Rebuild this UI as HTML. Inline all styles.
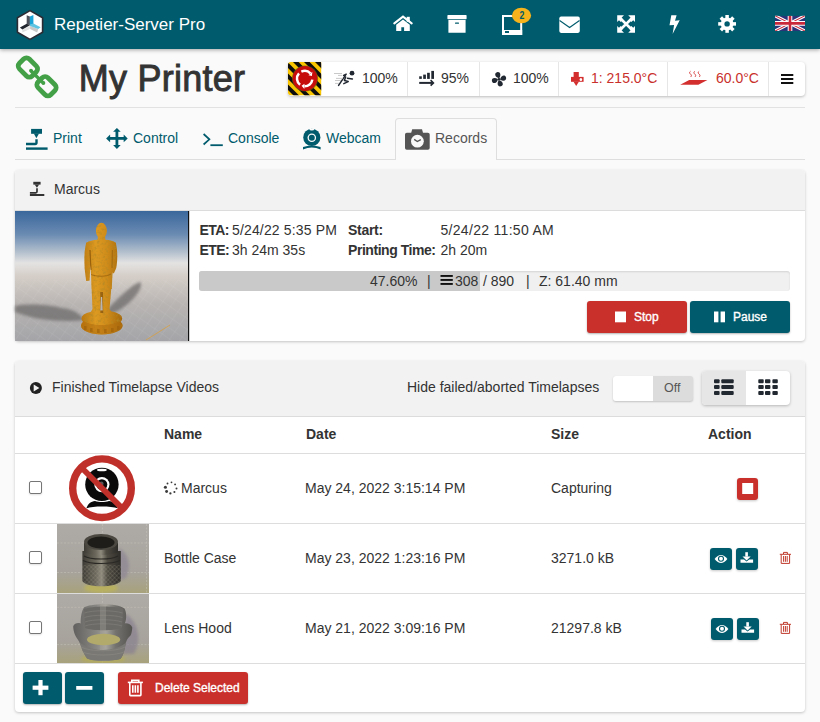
<!DOCTYPE html>
<html><head><meta charset="utf-8">
<style>
*{box-sizing:border-box}
html,body{margin:0;padding:0}
body{width:820px;height:722px;overflow:hidden;position:relative;background:#fafafa;font-family:"Liberation Sans",sans-serif;font-size:14px;color:#333}
.a{position:absolute}
.t{position:absolute;white-space:nowrap;line-height:16px;height:16px}
svg{position:absolute;overflow:visible}
#hdr{left:0;top:0;width:820px;height:49px;background:#005b6c;box-shadow:0 1px 4px rgba(0,0,0,.35)}
.bar{left:288px;top:62px;width:517px;height:34px;background:#fff;border-radius:4px;box-shadow:0 1px 3px rgba(0,0,0,.25)}
.div{position:absolute;top:0;width:1px;height:34px;background:#e6e6e6}
.panel{left:15px;width:790px;background:#fff;border-radius:4px;box-shadow:0 1px 3px rgba(0,0,0,.22)}
.ph{position:absolute;left:0;top:0;width:790px;background:#f2f2f2;border-bottom:1px solid #dcdcdc;border-radius:4px 4px 0 0}
.btn{position:absolute;border-radius:3px;box-shadow:0 1px 2px rgba(0,0,0,.3)}
.teal{background:#005b6c}
.red{background:#c9302c}
.hl{position:absolute;height:1px;background:#ddd}
.cb{position:absolute;width:13px;height:13px;border:1px solid #767676;border-radius:2px;background:#fff;box-shadow:0 1px 2px rgba(0,0,0,.12)}
.tc{color:#005b6c}
</style></head><body>

<!-- header -->
<div id="hdr" class="a"></div>
<div class="t" style="left:54px;top:15px;font-size:17px;line-height:20px;height:20px;color:#fff">Repetier-Server Pro</div>

<!-- title -->
<div class="t" style="left:78.8px;top:59px;font-size:36px;line-height:40px;height:40px;color:#333;-webkit-text-stroke:0.9px #333;letter-spacing:0.25px">My Printer</div>
<div class="hl" style="left:15px;top:107px;width:790px;background:#e2e2e2"></div>

<!-- status bar -->
<div class="a bar">
  <div class="div" style="left:119px"></div>
  <div class="div" style="left:191px"></div>
  <div class="div" style="left:270px"></div>
  <div class="div" style="left:379px"></div>
  <div class="div" style="left:480px"></div>
</div>
<div class="t" style="left:362px;top:70px">100%</div>
<div class="t" style="left:441px;top:70px">95%</div>
<div class="t" style="left:513px;top:70px">100%</div>
<div class="t" style="left:591px;top:70px;color:#c9302c">1: 215.0°C</div>
<div class="t" style="left:716px;top:70px;color:#c9302c">60.0°C</div>

<!-- tabs -->
<div class="hl" style="left:15px;top:159px;width:790px;background:#dedede"></div>
<div class="a" style="left:395px;top:118px;width:102px;height:42px;border:1px solid #dedede;border-bottom:none;border-radius:4px 4px 0 0;background:#fafafa"></div>
<div class="t tc" style="left:53px;top:130px">Print</div>
<div class="t tc" style="left:133px;top:130px">Control</div>
<div class="t tc" style="left:228px;top:130px">Console</div>
<div class="t tc" style="left:326px;top:130px">Webcam</div>
<div class="t" style="left:435px;top:130px;color:#555">Records</div>

<!-- panel 1 -->
<div class="a panel" style="top:170px;height:171px">
  <div class="ph" style="height:41px"></div>
</div>
<div class="t" style="left:54px;top:181px">Marcus</div>
<div class="t" style="left:199.5px;top:222px;font-weight:bold;letter-spacing:-0.6px">ETA:</div>
<div class="t" style="left:232px;top:222px;letter-spacing:0.15px">5/24/22 5:35 PM</div>
<div class="t" style="left:199.5px;top:242px;font-weight:bold;letter-spacing:-0.6px">ETE:</div>
<div class="t" style="left:232px;top:242px">3h 24m 35s</div>
<div class="t" style="left:348px;top:222px;font-weight:bold;letter-spacing:-0.3px">Start:</div>
<div class="t" style="left:440.5px;top:222px;letter-spacing:0.3px">5/24/22 11:50 AM</div>
<div class="t" style="left:348px;top:242px;font-weight:bold;letter-spacing:-0.45px">Printing Time:</div>
<div class="t" style="left:440.5px;top:242px">2h 20m</div>

<!-- progress -->
<div class="a" style="left:199px;top:271px;width:591px;height:20px;background:#f0f0f0;border-radius:3px;box-shadow:inset 0 1px 2px rgba(0,0,0,.12);overflow:hidden">
  <div class="a" style="left:0;top:0;width:281px;height:20px;background:#c9c9c9"></div>
</div>
<div class="t" style="left:370px;top:273px">47.60%</div>
<div class="t" style="left:427px;top:273px">|</div>
<div class="t" style="left:455px;top:273px">308</div>
<div class="t" style="left:483px;top:273px">/ 890</div>
<div class="t" style="left:526px;top:273px">|</div>
<div class="t" style="left:539px;top:273px">Z: 61.40 mm</div>

<!-- stop / pause -->
<div class="btn red" style="left:587px;top:301px;width:100px;height:32px"></div>
<div class="btn teal" style="left:690px;top:301px;width:100px;height:32px"></div>
<div class="t" style="left:634px;top:309px;color:#fff;font-size:12px;-webkit-text-stroke:0.35px #fff">Stop</div>
<div class="t" style="left:733px;top:309px;color:#fff;font-size:12px;-webkit-text-stroke:0.35px #fff">Pause</div>

<!-- panel 2 -->
<div class="a panel" style="top:361px;height:351px">
  <div class="ph" style="height:56px"></div>
</div>
<div class="t" style="left:52px;top:379px">Finished Timelapse Videos</div>
<div class="t" style="left:407px;top:379px">Hide failed/aborted Timelapses</div>
<div class="a" style="left:613px;top:376px;width:80px;height:25px;border-radius:3px;background:#dcdcdc;box-shadow:0 1px 2px rgba(0,0,0,.2);overflow:hidden">
  <div class="a" style="left:0;top:0;width:40px;height:25px;background:#fff"></div>
</div>
<div class="t" style="left:664px;top:380px;color:#555;font-size:12.5px">Off</div>
<div class="a" style="left:702px;top:371px;width:88px;height:34px;border-radius:4px;background:#fff;box-shadow:0 1px 3px rgba(0,0,0,.25);overflow:hidden">
  <div class="a" style="left:0;top:0;width:44px;height:34px;background:#e6e6e6"></div>
</div>

<!-- table -->
<div class="t" style="left:164px;top:426px;font-weight:bold">Name</div>
<div class="t" style="left:306px;top:426px;font-weight:bold">Date</div>
<div class="t" style="left:551px;top:426px;font-weight:bold">Size</div>
<div class="t" style="left:708px;top:426px;font-weight:bold">Action</div>
<div class="hl" style="left:15px;top:453px;width:790px"></div>
<div class="hl" style="left:15px;top:523px;width:790px"></div>
<div class="hl" style="left:15px;top:593px;width:790px"></div>
<div class="hl" style="left:15px;top:663px;width:790px"></div>

<div class="cb" style="left:29px;top:481px"></div>
<div class="cb" style="left:29px;top:551px"></div>
<div class="cb" style="left:29px;top:621px"></div>

<div class="t" style="left:181px;top:480px">Marcus</div>
<div class="t" style="left:305px;top:480px">May 24, 2022 3:15:14 PM</div>
<div class="t" style="left:551px;top:480px">Capturing</div>
<div class="t" style="left:164px;top:550px">Bottle Case</div>
<div class="t" style="left:305px;top:550px">May 23, 2022 1:23:16 PM</div>
<div class="t" style="left:551px;top:550px">3271.0 kB</div>
<div class="t" style="left:164px;top:620px">Lens Hood</div>
<div class="t" style="left:305px;top:620px">May 21, 2022 3:09:16 PM</div>
<div class="t" style="left:551px;top:620px">21297.8 kB</div>

<!-- footer buttons -->
<div class="btn teal" style="left:23px;top:672px;width:39px;height:32px"></div>
<div class="btn teal" style="left:65px;top:672px;width:39px;height:32px"></div>
<div class="btn red" style="left:118px;top:672px;width:130px;height:32px"></div>
<div class="t" style="left:155px;top:680px;color:#fff;font-size:12px;-webkit-text-stroke:0.35px #fff">Delete Selected</div>

<svg width="820" height="722" viewBox="0 0 820 722" style="position:absolute;left:0;top:0">
<polygon points="30,10.6 42.6,17.7 42.6,32.3 30,39.4 17.4,32.3 17.4,17.7" fill="#fff" stroke="#2b2b33" stroke-width="1.6" stroke-linejoin="round"/>
<polygon points="29.9,25.9 22.3,29.7 22.3,32.4 29.9,28.9" fill="#e2e2e2"/>
<polygon points="30.1,26 38.2,29 37.2,32.4 30.1,28.9" fill="#c9c9c9"/>
<polygon points="26.7,15.2 29.9,16.5 29.9,25.2 26.7,23.9" fill="#4f515b"/>
<polygon points="29.9,16.5 33.4,15.1 33.4,23.9 29.9,25.2" fill="#1aa4d8"/>
<polygon points="19.9,27.4 26.7,23.7 29.9,25.3 22.4,29.6" fill="#22252d"/>
<polygon points="30,24.5 33.4,23.5 40.6,27.3 38.2,28.9 30.1,26" fill="#5ec4e2"/>
<path d="M394.3,23.4 L403,16.7 L411.7,23.4" fill="none" stroke="#fff" stroke-width="2.1" stroke-linecap="round" stroke-linejoin="miter"/>
<rect x="406.7" y="16.8" width="3.1" height="5" fill="#fff"/>
<path d="M396.2,24.8 L403,19.6 L409.8,24.8 V31 H404.1 V27.2 H401.3 V31 H396.2Z" fill="#fff"/>
<rect x="447.4" y="15" width="19.2" height="4.3" rx="0.7" fill="#fff"/>
<rect x="448.4" y="19.9" width="17.2" height="12.9" rx="0.5" fill="#fff"/>
<rect x="455" y="22.5" width="4" height="1.2" rx="0.5" fill="#005b6c"/>
<path d="M503,16.1 H521.2 V34 H503Z" fill="none" stroke="#fff" stroke-width="2"/>
<rect x="502" y="30" width="20.2" height="4.9" fill="#fff"/>
<rect x="505" y="31" width="4" height="2" fill="#005b6c"/>
<ellipse cx="521.5" cy="15.5" rx="9.6" ry="7.7" fill="#f6b31b"/>
<text x="0" y="0" font-family="Liberation Sans" font-size="10.2" font-weight="bold" text-anchor="middle" fill="#005b6c" transform="translate(521.9 19.1) scale(0.86 1)">2</text>
<rect x="559.3" y="16.6" width="20.5" height="16.3" rx="1.8" fill="#fff"/>
<path d="M559.6,20.5 L569.6,27.5 L579.5,20.5" fill="none" stroke="#005b6c" stroke-width="1.1"/>
<g fill="#fff">
<polygon points="617.2,15.2 624,15.2 621.5,17.8 623.2,19.6 620.8,22 619,20.2 617.2,22"/>
<polygon points="635,15.2 628.2,15.2 630.7,17.8 629,19.6 631.4,22 633.2,20.2 635,22"/>
<polygon points="617.2,32.8 624,32.8 621.5,30.2 623.2,28.4 620.8,26 619,27.8 617.2,26"/>
<polygon points="635,32.8 628.2,32.8 630.7,30.2 629,28.4 631.4,26 633.2,27.8 635,26"/>
</g>
<path d="M620,18 L632.2,30 M632.2,18 L620,30" stroke="#fff" stroke-width="2.6"/>
<polygon points="671.3,15.2 676.6,15.2 675,20.8 679.7,20.3 672.6,33.9 674.1,25 669.5,25.3" fill="#fff"/>
<g fill="#fff"><rect x="725.35" y="15.00" width="3.5" height="4" transform="rotate(0 727.1 23.9)"/><rect x="725.35" y="15.00" width="3.5" height="4" transform="rotate(45 727.1 23.9)"/><rect x="725.35" y="15.00" width="3.5" height="4" transform="rotate(90 727.1 23.9)"/><rect x="725.35" y="15.00" width="3.5" height="4" transform="rotate(135 727.1 23.9)"/><rect x="725.35" y="15.00" width="3.5" height="4" transform="rotate(180 727.1 23.9)"/><rect x="725.35" y="15.00" width="3.5" height="4" transform="rotate(225 727.1 23.9)"/><rect x="725.35" y="15.00" width="3.5" height="4" transform="rotate(270 727.1 23.9)"/><rect x="725.35" y="15.00" width="3.5" height="4" transform="rotate(315 727.1 23.9)"/><circle cx="727.1" cy="23.9" r="6.4"/></g>
<circle cx="727.1" cy="23.9" r="2.7" fill="#005b6c"/>
<g><clipPath id="fc"><rect x="775" y="15.7" width="30" height="15.3"/></clipPath><g clip-path="url(#fc)">
<rect x="775" y="15.7" width="30" height="15.3" fill="#2b3479"/>
<path d="M775,15.7 L805,31 M805,15.7 L775,31" stroke="#fff" stroke-width="3.2"/>
<path d="M775,15.7 L805,31 M805,15.7 L775,31" stroke="#c8283a" stroke-width="1.1"/>
<path d="M790,15.7 V31 M775,23.35 H805" stroke="#fff" stroke-width="4.6"/>
<path d="M790,15.7 V31 M775,23.35 H805" stroke="#c8283a" stroke-width="2.6"/>
</g></g>
<g fill="none" stroke="#43a047" stroke-width="4.8">
<rect x="-9" y="-7" width="18" height="14" rx="4" transform="translate(27.9,67.5) rotate(45)"/>
<rect x="-9" y="-7" width="18" height="14" rx="4" transform="translate(46.5,86.2) rotate(45)"/>
</g>
<path d="M31.4,71.2 L42.9,82.6" stroke="#43a047" stroke-width="3.4" stroke-linecap="round"/>
<circle cx="31" cy="70.6" r="1.9" fill="#43a047"/><circle cx="43.4" cy="83" r="1.9" fill="#43a047"/>
<clipPath id="es"><path d="M291,62 H321.2 V95.2 H291 Q288,95.2 288,92.2 V65 Q288,62 291,62Z"/></clipPath>
<g clip-path="url(#es)"><rect x="288" y="62" width="34" height="34" fill="#f8c500"/><polygon points="238,62 243.6,62 277.6,96 272,96" fill="#0d0d0d"/><polygon points="249,62 254.6,62 288.6,96 283,96" fill="#0d0d0d"/><polygon points="260,62 265.6,62 299.6,96 294,96" fill="#0d0d0d"/><polygon points="271,62 276.6,62 310.6,96 305,96" fill="#0d0d0d"/><polygon points="282,62 287.6,62 321.6,96 316,96" fill="#0d0d0d"/><polygon points="293,62 298.6,62 332.6,96 327,96" fill="#0d0d0d"/><polygon points="304,62 309.6,62 343.6,96 338,96" fill="#0d0d0d"/><polygon points="315,62 320.6,62 354.6,96 349,96" fill="#0d0d0d"/><polygon points="326,62 331.6,62 365.6,96 360,96" fill="#0d0d0d"/><polygon points="337,62 342.6,62 376.6,96 371,96" fill="#0d0d0d"/></g>
<circle cx="305" cy="78.5" r="13.1" fill="#5a6a10" opacity="0.7"/>
<circle cx="305" cy="78.5" r="12.4" fill="#c70c0c"/>
<path d="M300.07,84.75 A7.7,7.7 0 0 1 298.98,73.45" fill="none" stroke="#fff" stroke-width="2.5"/>
<path d="M301.32,71.68 A7.7,7.7 0 0 1 310.42,73.45" fill="none" stroke="#fff" stroke-width="2.5"/>
<polygon points="312.35,71.71 308.49,75.19 311.94,75.97" fill="#fff"/>
<path d="M312.33,79.67 A7.7,7.7 0 0 1 304.43,86.30" fill="none" stroke="#fff" stroke-width="2.5"/>
<polygon points="304.34,88.89 304.52,83.70 301.57,85.63" fill="#fff"/>
<circle cx="352" cy="73.2" r="2.4" fill="#222831"/>
<path d="M338.6,85.4 L346.2,74.2 L343.6,75.4 M347.4,78.2 L352.4,79" fill="none" stroke="#222831" stroke-width="1.5" stroke-linecap="round" stroke-linejoin="round"/>
<path d="M345.6,77 L344.4,80.6 L348.2,81.6 L343.8,83.6" fill="none" stroke="#222831" stroke-width="1.5" stroke-linecap="round" stroke-linejoin="round"/>
<path d="M334,73.5 H342 M338,75.4 H342 M336,78.4 H343 M335,80.5 H341 M335,83.4 H339" stroke="#bbb" stroke-width="0.8"/>
<g fill="#222831"><rect x="419.2" y="76.3" width="2.6" height="2.6"/><rect x="423.2" y="74.6" width="2.7" height="4.3"/><rect x="427.1" y="72.8" width="2.7" height="6.1"/><rect x="431.3" y="70.9" width="2.7" height="8"/></g>
<path d="M419.2,82.9 H432.6" stroke="#222831" stroke-width="2"/><path d="M430.6,80.2 L433.4,82.9 L430.6,85.6" fill="none" stroke="#222831" stroke-width="1.6"/>
<g fill="#222831"><path d="M-0.3,-1.4 C-3.2,-2.6 -3.9,-7 -0.5,-7.3 C3,-7.5 3.1,-3.6 0.6,-1.2 Z" transform="translate(499 79.3) rotate(-12)"/><path d="M-0.3,-1.4 C-3.2,-2.6 -3.9,-7 -0.5,-7.3 C3,-7.5 3.1,-3.6 0.6,-1.2 Z" transform="translate(499 79.3) rotate(78)"/><path d="M-0.3,-1.4 C-3.2,-2.6 -3.9,-7 -0.5,-7.3 C3,-7.5 3.1,-3.6 0.6,-1.2 Z" transform="translate(499 79.3) rotate(168)"/><path d="M-0.3,-1.4 C-3.2,-2.6 -3.9,-7 -0.5,-7.3 C3,-7.5 3.1,-3.6 0.6,-1.2 Z" transform="translate(499 79.3) rotate(258)"/><circle cx="499" cy="79.3" r="1.4"/></g>
<g fill="#d32f2f"><rect x="573.6" y="72" width="5.2" height="5"/><rect x="571" y="76.9" width="12.6" height="4.9"/><polygon points="573.4,81.6 576.2,86 579,81.6"/></g>
<ellipse cx="580.9" cy="79.4" rx="1.3" ry="1.5" fill="#fff"/>
<polygon points="680.2,84.7 689.2,80 707.4,80 698.4,84.7" fill="#d32f2f"/>
<path d="M690.5,71.3 c-1.2,0.8 -1.2,1.8 0,2.8 c1.2,1 1.2,2 0,2.9 M694.8,71.3 c-1.2,0.8 -1.2,1.8 0,2.8 c1.2,1 1.2,2 0,2.9 M699.1,71.3 c-1.2,0.8 -1.2,1.8 0,2.8 c1.2,1 1.2,2 0,2.9" fill="none" stroke="#d32f2f" stroke-width="0.9"/>
<g fill="#111"><rect x="781" y="74" width="12.3" height="2"/><rect x="781" y="78" width="12.3" height="2"/><rect x="781" y="82" width="12.3" height="2"/></g>
<g fill="#005b6c"><rect x="31.1" y="128.9" width="10.9" height="4.9"/><polygon points="33.8,133.6 36.4,138.2 39,133.6"/><rect x="26" y="147.4" width="21.6" height="2.4"/></g>
<path d="M36.5,139.2 V142.6 Q36.5,144 35.1,144 H26" fill="none" stroke="#005b6c" stroke-width="2.4"/>
<g fill="#005b6c"><rect x="115.5" y="129.9" width="2.8" height="17"/><rect x="108.4" y="137.0" width="17" height="2.8"/><polygon points="116.9,127.9 120.7,131.70000000000002 113.10000000000001,131.70000000000002"/><polygon points="116.9,148.9 120.7,145.1 113.10000000000001,145.1"/><polygon points="106.10000000000001,138.4 110.10000000000001,134.6 110.10000000000001,142.20000000000002"/><polygon points="127.7,138.4 123.7,134.6 123.7,142.20000000000002"/></g>
<path d="M203.6,134 L209.4,139.3 L203.6,144.5" fill="none" stroke="#005b6c" stroke-width="1.7"/>
<rect x="210.4" y="144.3" width="12.4" height="1.8" fill="#005b6c"/>
<circle cx="311.8" cy="137.4" r="8.6" fill="#005b6c"/>
<circle cx="311.8" cy="137.8" r="4.3" fill="#fafafa"/><circle cx="311.8" cy="137.8" r="3.0" fill="#005b6c"/>
<ellipse cx="311.8" cy="129.5" rx="2.4" ry="0.9" fill="#fafafa"/>
<path d="M303,149.4 Q311.8,145.6 320.6,149.4 L320.6,147.1 Q311.8,144.4 303,147.1 Z" fill="#005b6c"/>
<path d="M406.8,132.7 H411.2 L412.2,129.2 H422 L423,132.7 H427.9 Q429.7,132.7 429.7,134.5 V148 Q429.7,149.8 427.9,149.8 H406.8 Q405,149.8 405,148 V134.5 Q405,132.7 406.8,132.7Z" fill="#555"/>
<circle cx="417.4" cy="141.2" r="6.4" fill="#fafafa"/>
<path d="M414.2,139.4 L417.3,141.6 L420.8,139.6" fill="none" stroke="#555" stroke-width="1.3"/>
<g fill="#333"><rect x="33.3" y="181.8" width="7.3" height="2.8"/><polygon points="34.6,184.4 36.9,187.8 39.2,184.4"/><rect x="29.9" y="194" width="14.4" height="2"/></g>
<path d="M37,188.2 V191.6 Q37,192.8 35.8,192.8 H29.9" fill="none" stroke="#333" stroke-width="1.7"/>
<rect x="615" y="311.5" width="11" height="10.8" fill="#fff"/>
<rect x="714" y="311.5" width="4.4" height="10.8" fill="#fff"/><rect x="720.6" y="311.5" width="4.4" height="10.8" fill="#fff"/>
<g fill="#111"><rect x="440.5" y="275" width="12.3" height="1.9"/><rect x="440.5" y="279" width="12.3" height="1.9"/><rect x="440.5" y="283" width="12.3" height="1.9"/></g>
<circle cx="35.9" cy="388.1" r="6" fill="#222"/><polygon points="33.7,384.6 39.4,388.1 33.7,391.6" fill="#f2f2f2"/>
<rect x="714" y="379.2" width="5.6" height="4" rx="1" fill="#222830"/>
<rect x="714" y="385" width="5.6" height="4" rx="1" fill="#222830"/>
<rect x="714" y="391" width="5.6" height="4" rx="1" fill="#222830"/>
<rect x="721.3" y="379.2" width="12.4" height="4" rx="1" fill="#222830"/>
<rect x="721.3" y="385" width="12.4" height="4" rx="1" fill="#222830"/>
<rect x="721.3" y="391" width="12.4" height="4" rx="1" fill="#222830"/>
<rect x="758.3" y="379.2" width="5.4" height="4" rx="0.9" fill="#222830"/>
<rect x="758.3" y="385" width="5.4" height="4" rx="0.9" fill="#222830"/>
<rect x="758.3" y="391" width="5.4" height="4" rx="0.9" fill="#222830"/>
<rect x="765" y="379.2" width="5.4" height="4" rx="0.9" fill="#222830"/>
<rect x="765" y="385" width="5.4" height="4" rx="0.9" fill="#222830"/>
<rect x="765" y="391" width="5.4" height="4" rx="0.9" fill="#222830"/>
<rect x="772.4" y="379.2" width="5.4" height="4" rx="0.9" fill="#222830"/>
<rect x="772.4" y="385" width="5.4" height="4" rx="0.9" fill="#222830"/>
<rect x="772.4" y="391" width="5.4" height="4" rx="0.9" fill="#222830"/>
<circle cx="171.5" cy="482.3" r="0.9" fill="#3a3a3a"/>
<circle cx="175.1" cy="484.4" r="0.95" fill="#3a3a3a"/>
<circle cx="176.5" cy="488.4" r="1.0" fill="#3a3a3a"/>
<circle cx="174.4" cy="492" r="1.05" fill="#3a3a3a"/>
<circle cx="170.4" cy="493.4" r="1.15" fill="#3a3a3a"/>
<circle cx="166.6" cy="491.5" r="1.45" fill="#3a3a3a"/>
<circle cx="165.4" cy="487.3" r="1.55" fill="#3a3a3a"/>
<circle cx="167.5" cy="483.5" r="0.95" fill="#3a3a3a"/>
<rect x="737" y="478" width="21" height="22" rx="3" fill="#c9302c" style="filter:drop-shadow(0 1px 1px rgba(0,0,0,.22))"/><rect x="742.2" y="483" width="11" height="11" fill="#fff"/>
<rect x="710" y="548" width="22" height="22" rx="3" fill="#005b6c" style="filter:drop-shadow(0 1px 1px rgba(0,0,0,.22))"/>
<rect x="736" y="548" width="22" height="22" rx="3" fill="#005b6c" style="filter:drop-shadow(0 1px 1px rgba(0,0,0,.22))"/>
<path d="M714.6,559 Q721,551.2 727.4,559 Q721,566.8 714.6,559Z" fill="#fff"/>
<circle cx="721" cy="558.8" r="2.5" fill="none" stroke="#005b6c" stroke-width="1.1"/>
<rect x="745.3" y="552.2" width="2.6" height="4.4" fill="#fff"/><polygon points="742.5,556.4 750.7,556.4 746.6,560.4" fill="#fff"/>
<path d="M740.5,559.4 H744 L746.6,561.6 L749.2,559.4 H753.1 V562.8 H740.5Z" fill="#fff"/>
<g fill="none" stroke="#c0392b" stroke-width="1"><path d="M783.5,554 V552.4 H787.4 V554"/><path d="M779.8,554.3 H791"/><path d="M781.2,554.5 V563.4 H789.6 V554.5"/><path d="M783.6,556 V561.8 M785.4,556 V561.8 M787.2,556 V561.8"/></g>
<rect x="711" y="618" width="22" height="22" rx="3" fill="#005b6c" style="filter:drop-shadow(0 1px 1px rgba(0,0,0,.22))"/>
<rect x="737" y="618" width="22" height="22" rx="3" fill="#005b6c" style="filter:drop-shadow(0 1px 1px rgba(0,0,0,.22))"/>
<path d="M715.6,629 Q722,621.2 728.4,629 Q722,636.8 715.6,629Z" fill="#fff"/>
<circle cx="722" cy="628.8" r="2.5" fill="none" stroke="#005b6c" stroke-width="1.1"/>
<rect x="746.3" y="622.2" width="2.6" height="4.4" fill="#fff"/><polygon points="743.5,626.4 751.7,626.4 747.6,630.4" fill="#fff"/>
<path d="M741.5,629.4 H745 L747.6,631.6 L750.2,629.4 H754.1 V632.8 H741.5Z" fill="#fff"/>
<g fill="none" stroke="#c0392b" stroke-width="1"><path d="M783.5,624 V622.4 H787.4 V624"/><path d="M779.8,624.3 H791"/><path d="M781.2,624.5 V633.4 H789.6 V624.5"/><path d="M783.6,626 V631.8 M785.4,626 V631.8 M787.2,626 V631.8"/></g>
<rect x="32.6" y="685.6" width="15.8" height="4.2" fill="#fff"/><rect x="38.4" y="680" width="4.2" height="15.2" fill="#fff"/>
<rect x="76.2" y="686" width="16.2" height="3.8" fill="#fff"/>
<g fill="none" stroke="#fff" stroke-width="1.6"><path d="M131.8,682 V680.4 H138.8 V682"/><path d="M127.8,682.4 H142.9"/><path d="M129.8,682.8 V694.8 Q129.8,695.6 130.6,695.6 H140.1 Q140.9,695.6 140.9,694.8 V682.8"/><path d="M132.8,685.2 V692.8 M135.35,685.2 V692.8 M137.9,685.2 V692.8"/></g>
<defs>
<linearGradient id="sky" x1="0" y1="211" x2="0" y2="341" gradientUnits="userSpaceOnUse">
<stop offset="0" stop-color="#3a679c"/><stop offset="0.18" stop-color="#6a8bb2"/><stop offset="0.32" stop-color="#b5c1ce"/>
<stop offset="0.4" stop-color="#e4e3e2"/><stop offset="0.5" stop-color="#d5cec8"/><stop offset="0.72" stop-color="#b8b4b2"/><stop offset="1" stop-color="#a4a4a8"/></linearGradient>
<linearGradient id="gold" x1="80" y1="0" x2="125" y2="0" gradientUnits="userSpaceOnUse"><stop offset="0" stop-color="#b8740e"/><stop offset="0.35" stop-color="#dc9a22"/><stop offset="0.6" stop-color="#d08c1a"/><stop offset="1" stop-color="#9c620a"/></linearGradient>
<filter id="bl1" x="-20%" y="-20%" width="140%" height="140%"><feGaussianBlur stdDeviation="1.6"/></filter>
<filter id="bl05"><feGaussianBlur stdDeviation="0.5"/></filter>
<pattern id="grid" width="9" height="9" patternUnits="userSpaceOnUse" patternTransform="rotate(35)"><path d="M0,0 H9 M0,0 V9" stroke="#ffffff" stroke-opacity="0.1" stroke-width="1"/></pattern>
</defs>
<rect x="15" y="211" width="173" height="130" fill="url(#sky)"/>
<rect x="15" y="280" width="173" height="61" fill="url(#grid)"/>
<g filter="url(#bl1)" fill="#6e6c6c" opacity="0.75"><path d="M15,306 C30,303 50,305 62,308 C72,309 80,313 84,320 C70,322 50,321 35,318 C25,316 18,313 15,312Z"/><path d="M108,309 C118,298 130,286 140,282 C143,284 140,292 132,300 C124,308 114,314 108,314Z"/></g>
<path d="M146,340 L170,325" stroke="#d9a040" stroke-width="0.8"/>
<rect x="188" y="211" width="1.2" height="130" fill="#111"/>
<defs><clipPath id="stc"><ellipse cx="101.8" cy="325.5" rx="20.8" ry="9"/><ellipse cx="101.8" cy="318.5" rx="20.4" ry="8"/><path d="M91.5,286 L92.5,309 L89.5,314.5 L100,315 L100.8,297 L102.2,297 L103,315 L113,314.5 L109.5,309 L111.5,286Z"/><path d="M91,272 L112.5,272 L111.8,289 L91.5,289Z"/><path d="M86,243 C90,238.5 112,238.5 116,243 L113.2,262 L112.5,274 L91,274 L90,262Z"/><path d="M86.5,242 C84,250 84,262 85,272 L86.2,281 L89.6,280.5 L90.2,268 L90.6,250Z"/><path d="M115.5,242 C118,250 117.5,262 116.2,268 L113.8,273.5 L111.6,271.5 L112.4,255Z"/><path d="M97.5,240.5 L98,236 L105,236 L105.5,240.5Z"/><ellipse cx="101.4" cy="230.8" rx="5.5" ry="8"/></clipPath><filter id="noise" x="0" y="0" width="100%" height="100%"><feTurbulence type="fractalNoise" baseFrequency="0.35" numOctaves="2" seed="5"/><feColorMatrix values="0 0 0 0 0.45  0 0 0 0 0.25  0 0 0 0 0.02  0 0 0 -2.6 1.35"/></filter></defs>
<g clip-path="url(#stc)"><rect x="80" y="220" width="45" height="115" fill="url(#gold)"/><rect x="80" y="220" width="45" height="115" filter="url(#noise)" opacity="0.8"/><path d="M80,319 C90,327 113,327 123,319 L123,336 L80,336Z" fill="#b06a0c" opacity="0.5"/><path d="M100.2,292 L103,292 L103.2,313 L100.4,313Z" fill="#6a3e06" opacity="0.55"/><path d="M90,250 L91,270 L90.5,262Z M112.4,250 L112,268" stroke="#8a5408" stroke-width="0.9" fill="none" opacity="0.6"/><g fill="#9a5e0a" opacity="0.55"><rect x="84" y="326" width="2.6" height="4"/><rect x="90" y="328" width="2.6" height="4"/><rect x="97" y="329" width="2.6" height="4"/><rect x="104" y="329" width="2.6" height="4"/><rect x="111" y="328" width="2.6" height="4"/><rect x="117" y="326" width="2.6" height="4"/></g><path d="M90,274 C96,277 106,277 111,274" stroke="#8a5408" stroke-width="1" fill="none" opacity="0.6"/></g>
<circle cx="101.9" cy="484.4" r="16.7" fill="#0a0a0a"/>
<circle cx="101.9" cy="484.6" r="7.6" fill="#fff"/><circle cx="101.9" cy="484.6" r="5.4" fill="#0a0a0a"/><circle cx="101.4" cy="483.8" r="2.2" fill="#555"/>
<ellipse cx="101.9" cy="470" rx="5" ry="1.3" fill="#fff"/>
<path d="M86.4,508.3 C88,503.5 91,501.5 95,501 C99,502.3 105,502.3 109,501 C113,501.5 116.3,503.5 117.8,508.3 C111,505.8 93,505.8 86.4,508.3Z" fill="#0a0a0a"/>
<circle cx="102" cy="488.2" r="29.3" fill="none" stroke="#c0302a" stroke-width="7.4"/>
<path d="M82.6,468.8 L121.5,507.6" stroke="#c0302a" stroke-width="5.8"/>
<defs><linearGradient id="tb1" x1="0" y1="0" x2="0" y2="1"><stop offset="0" stop-color="#aeaaa6"/><stop offset="0.7" stop-color="#a7a39c"/><stop offset="1" stop-color="#a8a27c"/></linearGradient>
<linearGradient id="metal" x1="0" y1="0" x2="1" y2="0"><stop offset="0" stop-color="#3c3a34"/><stop offset="0.35" stop-color="#6c685c"/><stop offset="0.5" stop-color="#8e8a7c"/><stop offset="0.65" stop-color="#4e4b42"/><stop offset="1" stop-color="#2e2c28"/></linearGradient>
<linearGradient id="metal2" x1="0" y1="0" x2="1" y2="0"><stop offset="0" stop-color="#62605e"/><stop offset="0.4" stop-color="#8a8884"/><stop offset="0.55" stop-color="#a6a49c"/><stop offset="0.72" stop-color="#74726e"/><stop offset="1" stop-color="#555350"/></linearGradient>
<pattern id="knurl" width="3" height="3" patternUnits="userSpaceOnUse" patternTransform="rotate(45)"><rect width="3" height="3" fill="none"/><path d="M0,0 H3 M0,0 V3" stroke="#a8a290" stroke-opacity="0.45" stroke-width="0.8"/></pattern>
</defs>
<clipPath id="cp1"><rect x="57" y="524" width="92" height="69"/></clipPath><g clip-path="url(#cp1)">
<rect x="57" y="524" width="92" height="69" fill="url(#tb1)"/>
<g stroke="#d8d4cc" stroke-opacity="0.5" stroke-width="0.7" stroke-dasharray="2 1.5"><path d="M102.4,524 V593 M146.6,524 V593 M57,543 H149 M57,572.5 H149"/></g>
<ellipse cx="101" cy="588" rx="17" ry="5" fill="#b8b060" filter="url(#bl1)"/>
<path d="M118,548 C128,552 132,565 126,578 L120,580Z" fill="#8c8494" opacity="0.7" filter="url(#bl1)"/>
<path d="M82.4,551 L82.4,581 C86,588 116,588 120.8,581 L120.8,551Z" fill="url(#metal)"/>
<path d="M82.4,565 L82.4,581 C86,588 116,588 120.8,581 L120.8,565Z" fill="url(#knurl)"/>
<path d="M84,543 L84,552 C90,556 112,556 118,552 L118,543Z" fill="url(#metal)"/>
<ellipse cx="101" cy="542" rx="17" ry="8" fill="#4a4840"/><ellipse cx="101" cy="542.5" rx="13.5" ry="6" fill="#1e1d1a"/>
<path d="M84,556 C90,560 112,560 118,556 M83,560.5 C90,564.5 112,564.5 120,560.5" stroke="#2a2824" stroke-width="1.2" fill="none"/>
</g>
<clipPath id="cp2"><rect x="57" y="594" width="92" height="69"/></clipPath><g clip-path="url(#cp2)">
<rect x="57" y="594" width="92" height="69" fill="url(#tb1)"/>
<g stroke="#d8d4cc" stroke-opacity="0.5" stroke-width="0.7" stroke-dasharray="2 1.5"><path d="M102.4,594 V663 M57,607.3 H149 M57,644.6 H149"/></g>
<ellipse cx="103" cy="659" rx="22" ry="5" fill="#b4ac5c" opacity="0.8" filter="url(#bl1)"/>
<path d="M126,614 C138,622 142,640 134,654 L122,654Z" fill="#857d8e" opacity="0.65" filter="url(#bl1)"/>
<path d="M73.2,626.3 C74.5,623 78,622.5 80.7,623.4 C80.5,618 81.5,611 84,607.5 C90,603.5 116,602.5 124.5,608.5 C126.5,612 127,619 124.8,623.4 C127.5,623 131,624 132.3,627.4 C132,631 131.5,634 130.5,635.4 C128,638 126.5,640 126,642.3 C125,647 124.5,650 123.7,652.6 C122.5,656 121.5,658 120.2,659 C112,661.5 93,661.5 87,658.4 C84.5,655 83.5,652.5 82.4,650.3 C81,646 80,643 78.9,641.2 C76.5,638 75,635.5 74.3,633.1 C73.5,630 73.2,628 73.2,626.3Z" fill="url(#metal2)"/>
<path d="M84,609 C92,606 114,605.5 123,609 L122,628 C114,631 92,631 85,628Z" fill="#6c6a67"/>
<g stroke="#8e8c86" stroke-opacity="0.55" stroke-width="0.8" fill="none"><path d="M84.5,613 C92,610 114,610 122.5,613 M84.5,617.5 C92,614.5 114,614.5 122.5,617.5 M85,622 C92,619 114,619 122,622 M85,626 C92,623 114,623 122,626"/></g>
<path d="M100,604 L106,604 L106,660 L100,660Z" fill="#a6a49a" opacity="0.35"/>
<ellipse cx="103.6" cy="639.5" rx="16.6" ry="5.8" fill="#b2aa6a"/>
<path d="M78.9,641.2 C84,648 96,650 103.6,650 C112,650 122,647 126,642.3 C125,647 124.5,650 123.7,652.6 C122.5,656 121.5,658 120.2,659 C112,661.5 93,661.5 87,658.4 C84.5,655 83.5,652.5 82.4,650.3 C81,646 80,643 78.9,641.2Z" fill="#7a7874"/>
<g stroke="#9a988e" stroke-opacity="0.5" stroke-width="0.7" fill="none"><path d="M81,647 C90,652 116,652 125,647 M82.5,652 C92,656 114,656 124,652"/></g>
</g>
</svg>
</body></html>
